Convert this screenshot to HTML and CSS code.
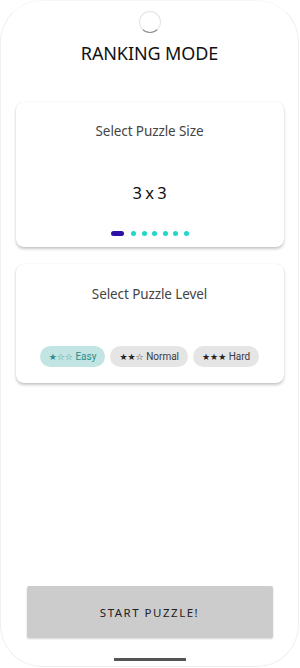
FILE: index.html
```html
<!DOCTYPE html>
<html>
<head>
<meta charset="utf-8">
<link rel="stylesheet" href="styles.css">
</head>
<body>
<div class="phone">
  <div class="camera"></div>
  <h1 class="title">RANKING MODE</h1>
  <section class="card size-card">
    <h2 class="card-title">Select Puzzle Size</h2>
    <div class="size-value">3 x 3</div>
    <div class="dots">
      <span class="dot active"></span>
      <span class="dot"></span>
      <span class="dot"></span>
      <span class="dot"></span>
      <span class="dot"></span>
      <span class="dot"></span>
      <span class="dot"></span>
    </div>
  </section>
  <section class="card level-card">
    <h2 class="card-title">Select Puzzle Level</h2>
    <div class="chips">
      <span class="chip selected"><span class="stars">★☆☆</span> Easy</span>
      <span class="chip"><span class="stars">★★☆</span> Normal</span>
      <span class="chip"><span class="stars">★★★</span> Hard</span>
    </div>
  </section>
  <div class="spacer"></div>
  <button class="start">START PUZZLE!</button>
  <div class="home-bar"></div>
</div>
</body>
</html>
```
FILE: styles.css
```css
html, body {
  margin: 0;
  padding: 0;
  background: #fff;
}
.phone {
  box-sizing: border-box;
  width: 299px;
  height: 667px;
  border: 1px solid #efefef;
  border-top-color: #f7f7f7;
  border-radius: 42px;
  display: flex;
  flex-direction: column;
  align-items: center;
  font-family: "Noto Sans", "Open Sans", sans-serif;
}
.camera {
  margin-top: 10px;
  width: 20px;
  height: 20px;
  border-radius: 50%;
  border: 1px solid #e4e4e4;
  border-bottom-color: #8a8a8a;
  flex: none;
}
.title {
  margin: 8px 0 0;
  font-size: 18px;
  line-height: 24px;
  font-weight: 400;
  color: #111;
  letter-spacing: -0.1px;
}
.card {
  box-sizing: border-box;
  width: 268px;
  background: #fff;
  border-radius: 8px;
  box-shadow: 0 2px 3px rgba(0,0,0,0.22), 0 0 1px rgba(0,0,0,0.12);
  display: flex;
  flex-direction: column;
  align-items: center;
}
.size-card {
  margin-top: 37px;
  height: 145px;
  padding-top: 19px;
}
.level-card {
  margin-top: 17px;
  height: 119px;
  padding-top: 20px;
}
.card-title {
  margin: 0;
  font-size: 13.5px;
  line-height: 20px;
  font-weight: 400;
  color: #444;
  letter-spacing: -0.1px;
}
.size-value {
  margin-top: 40px;
  font-size: 16.5px;
  line-height: 24px;
  color: #111;
  word-spacing: -1px;
}
.dots {
  margin-top: 26px;
  display: flex;
  align-items: center;
  gap: 5.5px;
}
.dot {
  width: 5px;
  height: 5px;
  border-radius: 50%;
  background: #1fd8c6;
}
.dot.active {
  width: 13px;
  height: 5px;
  border-radius: 3px;
  background: #2c10a8;
  margin-right: 2px;
}
.chips {
  margin-top: 42px;
  display: flex;
  gap: 5px;
}
.chip {
  height: 21px;
  line-height: 21px;
  padding: 0 9px;
  border-radius: 11px;
  background: #e5e5e5;
  color: #3a3a3a;
  font-family: Roboto, "Liberation Sans", sans-serif;
  font-size: 10px;
  white-space: nowrap;
}
.chip .stars {
  font-family: "DejaVu Sans", sans-serif;
  font-size: 9px;
  color: #222;
}
.chip.selected {
  background: #c2e4e3;
  color: #2b8d8a;
}
.chip.selected .stars {
  color: #2b8d8a;
}
.spacer {
  flex: 1;
}
.start {
  width: 246px;
  height: 52px;
  border: none;
  border-radius: 2px;
  background: #cccccc;
  box-shadow: 0 1px 2px rgba(0,0,0,0.18);
  font-family: "Noto Sans", "Open Sans", sans-serif;
  font-size: 11.5px;
  letter-spacing: 1.5px;
  color: #222;
  padding: 0;
  flex: none;
}
.home-bar {
  margin-top: 20px;
  margin-bottom: 5px;
  width: 72px;
  height: 3px;
  background: #555;
  flex: none;
}
```
